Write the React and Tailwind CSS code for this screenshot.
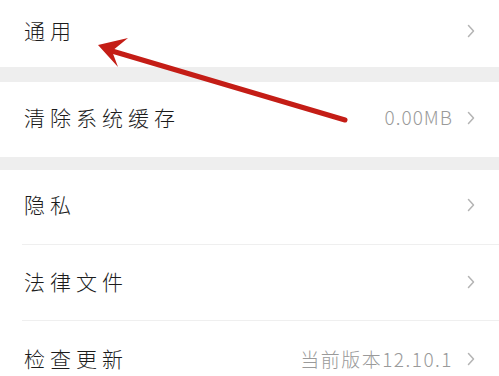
import React from "react";

const font = { fontFamily: '"Noto Sans CJK SC", "Noto Sans", sans-serif' };

function Chevron() {
  return (
    <svg width="8" height="14" viewBox="0 0 8 14" className="ml-[14px] shrink-0">
      <path d="M1.5 1.5 L6.5 7 L1.5 12.5" fill="none" stroke="#b4b4b4" strokeWidth="1.5" strokeLinecap="round" strokeLinejoin="round" />
    </svg>
  );
}

function Row({ label, value, valueClass = "tracking-[2px]", divider, className = "" }) {
  return (
    <div className={`relative flex items-center pl-[24px] pr-[24px] bg-white ${className}`}>
      <span className="text-[21px] tracking-[5px] text-[#1c1c1c] font-light">{label}</span>
      <div className="flex-1" />
      {value && <span className={`text-[19px] text-[#9a9a9a] font-light ${valueClass}`}>{value}</span>}
      <Chevron />
      {divider && <div className="absolute left-[22px] right-0 bottom-0 h-px bg-[#efefef]" />}
    </div>
  );
}

export default function App() {
  return (
    <div className="relative w-[499px] h-[376px] overflow-hidden bg-white" style={font}>
      <Row label="通用" className="h-[67px] pb-[6px]" />
      <div className="h-[15px] bg-[#eeeeee]" />
      <Row label="清除系统缓存" value="0.00MB" valueClass="tracking-[1px]" className="h-[75px] pb-[4px]" />
      <div className="h-[13px] bg-[#eeeeee]" />
      <Row label="隐私" divider className="h-[75px] pb-[5px]" />
      <Row label="法律文件" divider className="h-[76px] pb-[2px]" />
      <Row label="检查更新" value="当前版本12.10.1" valueClass="tracking-[1.5px]" className="h-[76px]" />

      {/* red annotation arrow */}
      <svg className="absolute left-0 top-0 pointer-events-none" width="499" height="376">
        <line x1="345" y1="120" x2="112" y2="51" stroke="#c41d16" strokeWidth="5" strokeLinecap="round" />
        <polygon points="98,45 128,38 112,51 118,67" fill="#c41d16" />
      </svg>
    </div>
  );
}
